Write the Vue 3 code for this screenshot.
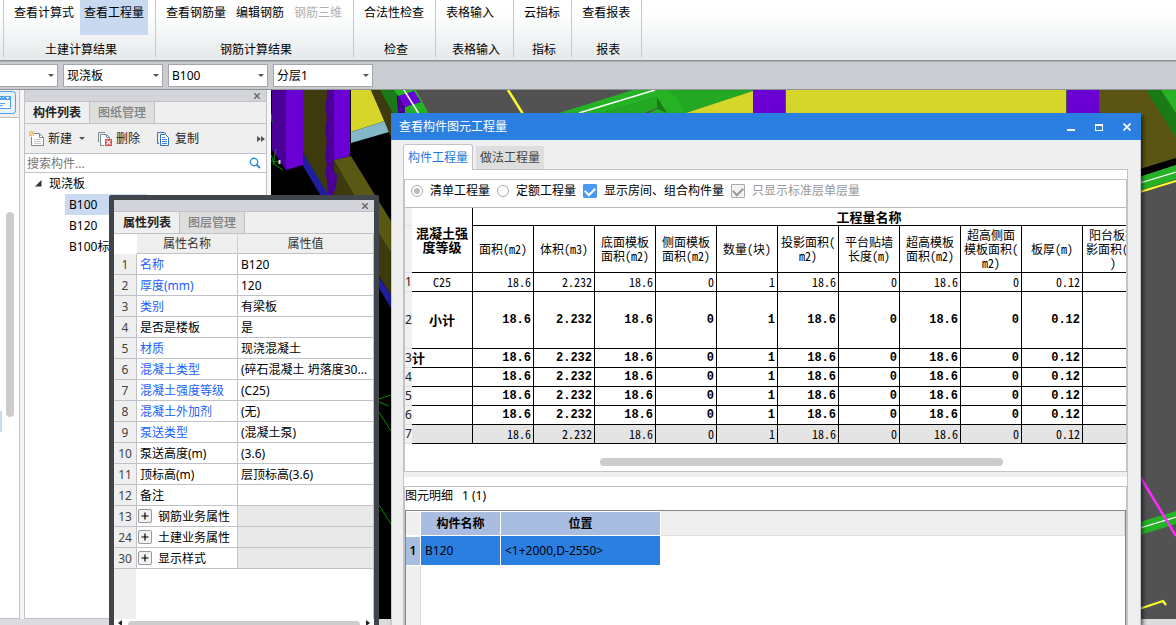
<script setup>
import { ref } from 'vue'

const ribbon = [
  { label: '土建计算结果', items: [{ text: '查看计算式' }, { text: '查看工程量', active: true }] },
  { label: '钢筋计算结果', items: [{ text: '查看钢筋量' }, { text: '编辑钢筋' }, { text: '钢筋三维', disabled: true }] },
  { label: '检查', items: [{ text: '合法性检查' }] },
  { label: '表格输入', items: [{ text: '表格输入' }], wide: true },
  { label: '指标', items: [{ text: '云指标' }] },
  { label: '报表', items: [{ text: '查看报表' }] }
]

const selectors = [
  { name: '楼层', value: '' },
  { name: '构件类型', value: '现浇板' },
  { name: '构件', value: 'B100' },
  { name: '分层', value: '分层1' }
]

const properties = [
  { no: 1, name: '名称', value: 'B120', link: true },
  { no: 2, name: '厚度(mm)', value: '120', link: true },
  { no: 3, name: '类别', value: '有梁板', link: true },
  { no: 4, name: '是否是楼板', value: '是' },
  { no: 5, name: '材质', value: '现浇混凝土', link: true },
  { no: 6, name: '混凝土类型', value: '(碎石混凝土 坍落度30...', link: true },
  { no: 7, name: '混凝土强度等级', value: '(C25)', link: true },
  { no: 8, name: '混凝土外加剂', value: '(无)', link: true },
  { no: 9, name: '泵送类型', value: '(混凝土泵)', link: true },
  { no: 10, name: '泵送高度(m)', value: '(3.6)' },
  { no: 11, name: '顶标高(m)', value: '层顶标高(3.6)' },
  { no: 12, name: '备注', value: '' },
  { no: 13, name: '钢筋业务属性', value: '', group: true },
  { no: 24, name: '土建业务属性', value: '', group: true },
  { no: 30, name: '显示样式', value: '', group: true }
]

const columns = [
  '面积(m2)', '体积(m3)', '底面模板\n面积(m2)', '侧面模板\n面积(m2)', '数量(块)',
  '投影面积(\nm2)', '平台贴墙\n长度(m)', '超高模板\n面积(m2)',
  '超高侧面\n模板面积(\nm2)', '板厚(m)', '阳台板投\n影面积(m2\n)'
]
const values = ['18.6', '2.232', '18.6', '0', '1', '18.6', '0', '18.6', '0', '0.12', '']
const rows = [
  { no: 1, label: 'C25', kind: 'plain' },
  { no: 2, label: '小计', kind: 'strong tall' },
  { no: 3, label: '计', kind: 'strong cut' },
  { no: 4, label: '', kind: 'strong' },
  { no: 5, label: '', kind: 'strong' },
  { no: 6, label: '', kind: 'strong' },
  { no: 7, label: '', kind: 'plain shade' }
]

const mode = ref('list')
const showRooms = ref(true)
</script>

<template>
  <div class="app">
    <header class="ribbon">
      <section v-for="g in ribbon" :key="g.label" class="group" :class="{ wide: g.wide }">
        <div class="group-items">
          <button v-for="b in g.items" :key="b.text" type="button" class="rbtn" :class="{ active: b.active }" :disabled="b.disabled">{{ b.text }}</button>
        </div>
        <div class="group-label">{{ g.label }}</div>
      </section>
    </header>

    <div class="selectbar">
      <span v-for="s in selectors" :key="s.name" class="combo">
        <select :aria-label="s.name"><option>{{ s.value }}</option></select>
      </span>
    </div>

    <main class="workspace">
      <div class="panes">
        <aside class="rail">
          <button type="button" class="rail-btn" aria-label="导航">
            <svg width="17" height="25" viewBox="0 0 17 25">
              <path d="M0 1.5H12.500Q15.500 1.500 15.500 4.500V20.500Q15.500 23.500 12.500 23.500H0" fill="#e6f1fe" stroke="#4ea0f8" />
              <path d="M0 6.500H10.500V18.500H0" fill="#fff" stroke="#4ea0f8" />
              <path d="M0 6H11V10H0Z" fill="#4ea0f8" />
              <path d="M0 7.500H1M3 7.500H4M6 7.500H9M7 8.500H8" stroke="#fff" />
              <path d="M0 13.500H5M0 15.500H3" stroke="#4ea0f8" />
            </svg>
          </button>
          <div class="rail-body"><span class="rail-thumb"></span><span class="rail-mark"></span></div>
        </aside>

        <section class="panel">
          <div class="strip"><button type="button" class="close" aria-label="关闭"><svg width="6" height="6" viewBox="0 0 6 6"><path d="M0 0L6 6M6 0L0 6" stroke="#666" stroke-width="1.400" /></svg></button></div>
          <nav class="tabs">
            <button type="button" class="tab on">构件列表</button>
            <button type="button" class="tab">图纸管理</button>
          </nav>
          <div class="tools">
            <button type="button" class="tool">
              <svg width="16" height="16" viewBox="0 0 16 16"><path d="M3.500 2.500H10.500L14.500 6.500V14.500H2.500V6" fill="#fff" stroke="#7b8a94" /><path d="M10.500 2.500V6.500H14.500" fill="none" stroke="#7b8a94" /><path d="M5 8.500H12M5 10.500H12M5 12.500H12" stroke="#ccc" /><path d="M2.500 0V5M0 2.500H5M0 0L5 5M5 0L0 5" stroke="#f5a623" /><circle cx="2.500" cy="2.500" r="1" fill="#fff" /></svg>
              新建<span class="caret"></span>
            </button>
            <button type="button" class="tool">
              <svg width="16" height="16" viewBox="0 0 16 16"><path d="M1.500 11V1.500H8" fill="none" stroke="#7b8a94" /><path d="M7 14.500H3.500V3.500H9.500L12.500 6.500V8" fill="#fff" stroke="#7b8a94" /><path d="M9.500 3.500V6.500H12.500" fill="none" stroke="#7b8a94" /><path d="M8 8H15V15H8Z" fill="#dc4b52" /><path d="M9.500 9.500L13.500 13.500M13.500 9.500L9.500 13.500" stroke="#fff" stroke-width="1.200" /></svg>
              删除
            </button>
            <button type="button" class="tool">
              <svg width="16" height="16" viewBox="0 0 16 16"><path d="M3 12.500H1.500V1.500H8.500L10 3" fill="none" stroke="#2f74c8" /><path d="M4.500 3.500H9.500L12.500 6.500V14.500H4.500Z" fill="#fff" stroke="#2f74c8" /><path d="M6 6.500H9M6 8.500H11M6 10.500H11M6 12.500H11" stroke="#3b82d8" /></svg>
              复制
            </button>
            <span class="more"><svg width="8" height="6" viewBox="0 0 8 6"><path d="M0 0L4 3L0 6ZM4 0L8 3L4 6Z" fill="#555" /></svg></span>
          </div>
          <div class="search">
            <input type="text" placeholder="搜索构件..." aria-label="搜索构件" />
            <svg width="12" height="12" viewBox="0 0 12 12"><circle cx="5" cy="5" r="3.700" fill="none" stroke="#2b8fd0" stroke-width="1.400" /><path d="M7.500 7.500L11 11" stroke="#2b8fd0" stroke-width="2" /></svg>
          </div>
          <ul class="tree">
            <li class="root"><svg width="7" height="7" viewBox="0 0 7 7"><path d="M6.500 0V6.500H0Z" fill="#333" /></svg>现浇板</li>
            <li class="leaf"><span class="sel">B100</span></li>
            <li class="leaf"><span>B120</span></li>
            <li class="leaf"><span>B100标</span></li>
          </ul>
        </section>

        <div class="canvas">
          <svg class="scene" viewBox="271 90 905 529" preserveAspectRatio="xMinYMin slice">
            <path d="M271 90H1176V619H271Z" fill="#000" />
            <path d="M416 90H1176V619H416Z" fill="#525252" />
            <path d="M272 90H286V170L272 150Z" fill="#4a0096" />
            <path d="M286 90H303V165L286 170Z" fill="#6a00d4" />
            <path d="M303 90H328V196L303 153Z" fill="#3d3a0e" />
            <path d="M303 153L329 196H321L303 166Z" fill="#1e1e9e" />
            <path d="M327 90H334V196H328L327 180L325 172L327 165L325 155L327 142L325 130L327 118L325 104L327 98Z" fill="#4a0096" />
            <path d="M334 90H350V156L334 160Z" fill="#6a00d4" />
            <path d="M334 160L351 156L391 221V260L379 240L355 200Z" fill="#5a5914" />
            <path d="M334 160L355 196L379 233L391 252V295L334 205Z" fill="#3d3a0e" />
            <path d="M334 172L337 175L336 188L334 192Z" fill="#4a0096" />
            <path d="M379 277L391 295V308L379 288Z" fill="#1e1e9e" />
            <path d="M351 90H371L385 121L351 132Z" fill="#d6d62a" />
            <path d="M351 132L385 121L389 132L351 143Z" fill="#82b8c8" />
            <path d="M371 90H381L394 113L398 150L391 137Z" fill="#3d3a0e" />
            <path d="M380 90H397L398 113H393Z" fill="#1a7a18" />
            <path d="M394 90H416L429 114H398V96Z" fill="#25b325" />
            <path d="M398 96L414 91L421 102L405 107V113H398Z" fill="#6a00d4" />
            <path d="M398 96L405 107V113H398Z" fill="#4a0096" />
            <path d="M404 90L419 114" stroke="#fff" stroke-width="1.500" />
            <path d="M508 90L523 114" stroke="#ffff2a" stroke-width="2.500" />
            <path d="M559 113L633 90H753V91L686 113H649L657 109V97L602 113Z" fill="#25b325" />
            <path d="M602 113L657 97V108L645 113Z" fill="#22a822" />
            <path d="M668 90H753V91L686 113L676 97Z" fill="#22a822" />
            <path d="M657 97L667 113L657 109Z" fill="#1a7a18" />
            <path d="M579 113L655 90" stroke="#fff" stroke-width="1.500" />
            <path d="M686 113L753 91V114H686Z" fill="#d6d62a" />
            <path d="M753 90H785V114H753ZM1067 90H1099V114H1067Z" fill="#6a00d4" />
            <path d="M786 90H1066V114H786Z" fill="#d6d62a" />
            <path d="M1099 90H1176V158L1141 169L1099 180Z" fill="#5a5512" />
            <path d="M1146 90H1161L1176 113V138Z" fill="#1a7a18" />
            <path d="M1161 90H1176V113Z" fill="#25b325" />
            <path d="M1130 172L1176 158V165L1130 180Z" fill="#000" />
            <path d="M1130 180L1176 165V179L1130 194Z" fill="#25b325" />
            <path d="M1130 186L1176 172" stroke="#fff" stroke-width="1.300" />
            <path d="M1130 195L1176 181" stroke="#ffff2a" stroke-width="2" />
            <path d="M1130 525L1176 511V524L1130 538Z" fill="#25b325" />
            <path d="M1130 531L1176 517" stroke="#fff" stroke-width="1.300" />
            <path d="M1130 460L1176 536" stroke="#ff2aff" stroke-width="2.500" />
            <path d="M1130 612L1163 601L1166 605" fill="none" stroke="#ffff2a" stroke-width="2.200" />
            <path d="M271 113L272 122M273 165L276 149M271 155L275 165L283 170M271 161L280 162M379 399L391 395M379 402L389 406M379 412L391 431M379 505L391 524" fill="none" stroke="#0a8a0a" />
            <path d="M279.500 160V164" stroke="#ddd" stroke-width="2" />
          </svg>
        </div>
      </div>
      <div class="statusbar"></div>

      <section class="props">
        <div class="strip"><button type="button" class="close" aria-label="关闭"><svg width="6" height="6" viewBox="0 0 6 6"><path d="M0 0L6 6M6 0L0 6" stroke="#666" stroke-width="1.400" /></svg></button></div>
        <nav class="tabs">
          <button type="button" class="tab on">属性列表</button>
          <button type="button" class="tab">图层管理</button>
        </nav>
        <div class="props-body">
          <table class="ptable">
            <colgroup><col class="c-no" /><col class="c-name" /><col /></colgroup>
            <thead><tr><th class="corner"></th><th>属性名称</th><th>属性值</th></tr></thead>
            <tbody>
              <tr v-for="p in properties" :key="p.no">
                <td class="no">{{ p.no }}</td>
                <td class="name" :class="{ link: p.link }"><button v-if="p.group" type="button" class="plus" aria-label="展开"><svg width="8" height="8" viewBox="0 0 8 8"><path d="M4 0.500V7.500M0.500 4H7.500" stroke="#000" stroke-width="1.200" /></svg></button>{{ p.name }}</td>
                <td class="val" :class="{ grey: p.group }">{{ p.value }}</td>
              </tr>
            </tbody>
          </table>
          <div class="gutter"></div>
        </div>
        <div class="hscroll">
          <svg width="4" height="6" viewBox="0 0 4 6"><path d="M4 0L0 3L4 6Z" fill="#222" /></svg>
          <span></span>
          <svg width="4" height="6" viewBox="0 0 4 6"><path d="M0 0L4 3L0 6Z" fill="#222" /></svg>
        </div>
      </section>

      <section class="dialog">
        <div class="titlebar">
          <h1>查看构件图元工程量</h1>
          <button type="button" aria-label="最小化"><svg width="8" height="8" viewBox="0 0 8 8"><path d="M0 6H8V8H0Z" fill="#fff" /></svg></button>
          <button type="button" aria-label="最大化"><svg width="8" height="8" viewBox="0 0 8 8"><path d="M0 1H8V8H0ZM1 3V7H7V3Z" fill="#fff" fill-rule="evenodd" /></svg></button>
          <button type="button" aria-label="关闭"><svg width="8" height="8" viewBox="0 0 8 8"><path d="M0.500 0.500L7.500 7.500M7.500 0.500L0.500 7.500" stroke="#fff" stroke-width="1.600" /></svg></button>
        </div>
        <div class="dialog-body">
          <nav class="dtabs">
            <button type="button" class="dtab on">构件工程量</button>
            <button type="button" class="dtab">做法工程量</button>
          </nav>
          <div class="pane">
            <div class="box">
              <div class="options">
                <label><input v-model="mode" type="radio" name="mode" value="list" />清单工程量</label>
                <label><input v-model="mode" type="radio" name="mode" value="quota" />定额工程量</label>
                <label><input v-model="showRooms" type="checkbox" />显示房间、组合构件量</label>
                <label class="off"><input type="checkbox" checked disabled />只显示标准层单层量</label>
              </div>
              <div class="sheet">
                <table class="qtable">
                  <colgroup><col class="q-no" /><col v-for="n in 12" :key="n" class="q-col" /></colgroup>
                  <thead>
                    <tr class="h1"><td class="idx"></td><th rowspan="2" class="grade">混凝土强<br />度等级</th><th colspan="11" class="span">工程量名称</th></tr>
                    <tr class="h2"><td class="idx"></td><th v-for="c in columns" :key="c" class="col">{{ c }}</th></tr>
                  </thead>
                  <tbody>
                    <tr v-for="r in rows" :key="r.no" :class="r.kind">
                      <td class="idx">{{ r.no }}</td>
                      <td class="lab">{{ r.label }}</td>
                      <td v-for="(v, i) in values" :key="i" class="num">{{ v }}</td>
                    </tr>
                  </tbody>
                </table>
                <div class="thumb-row"><span></span></div>
              </div>
            </div>
            <div class="splitter"></div>
            <div class="box detail">
              <div class="detail-title"><span>图元明细</span><span>1 (1)</span></div>
              <div class="dwrap">
                <table class="dtable">
                  <thead><tr><th class="d-idx"></th><th class="d-a">构件名称</th><th class="d-b">位置</th><th class="d-fill"></th></tr></thead>
                  <tbody><tr><th class="d-row">1</th><td>B120</td><td>&lt;1+2000,D-2550&gt;</td><td class="d-none"></td></tr></tbody>
                </table>
                <div class="d-gutter"></div>
              </div>
            </div>
          </div>
        </div>
      </section>
    </main>
  </div>
</template>

<style>
html, body { overflow: hidden; }
</style>

<style scoped>
.app, .app * { box-sizing: border-box; }
.app { height: 100vh; display: flex; flex-direction: column; overflow: hidden; font: 12px/16px "Noto Sans", "Noto Sans CJK SC", sans-serif; color: #000; background: #dcdcde; }
button, input, select { font: inherit; color: inherit; margin: 0; }
button { padding: 0; border: 0; background: none; white-space: nowrap; }
svg { display: block; flex: none; }
table { border-collapse: separate; border-spacing: 0; table-layout: fixed; }
th, td { padding: 0; }

.ribbon { flex: none; height: 61px; display: flex; padding: 0 0 3px 3px; background: linear-gradient(#fff 20%, #e5e9ea); border-bottom: 1px solid #8b8f93; }
.group { display: flex; flex-direction: column; border-left: 1px solid #c6c9cc; padding: 0 7px 0 6px; }
.group:last-child { border-right: 1px solid #c6c9cc; }
.group-items { display: flex; gap: 2px; }
.wide .group-items { padding-right: 8px; }
.rbtn { height: 35px; padding: 5px 4px 14px; }
.rbtn.active { background: #c8d9f0; }
.rbtn:disabled { color: #b0b0b0; }
.group-label { text-align: center; padding: 7px 0 0 4px; }

.selectbar { flex: none; height: 29px; display: flex; gap: 5px; padding: 3px 0 2px; background: #c9ccd1; border-bottom: 1px solid #8f9297; box-shadow: inset 0 2px 1px -1px #a9acb0; }
.combo { position: relative; width: 100px; height: 23px; }
.combo:first-child { width: 58px; }
.combo select { appearance: none; width: 100%; height: 23px; padding: 0 20px 0 3px; border: 1px solid #a4a6a9; border-radius: 0; background: #fff; }
.combo:first-child select { border-left: 0; }
.combo::after { content: ""; position: absolute; right: 4px; top: 10px; border: 3px solid transparent; border-top-color: #555; border-bottom: 0; }

.workspace { flex: 1; min-height: 0; position: relative; display: flex; flex-direction: column; overflow: hidden; }
.panes { flex: 1; min-height: 0; display: flex; background: #f6f6f6; }
.statusbar { flex: none; height: 6px; background: #dcdcde; }

.rail { width: 20px; display: flex; flex-direction: column; background: #efefef; border-right: 1px solid #bfc3c8; border-bottom: 1px solid #bfc3c8; }
.rail-btn { height: 27px; align-self: flex-start; padding-bottom: 2px; }
.rail-body { flex: 1; position: relative; background: #fff; border-top: 1px solid #bfc3c8; }
.rail-thumb { position: absolute; left: 6px; top: 94px; width: 8px; height: 205px; border-radius: 4px; background: #ccc; }
.rail-mark { position: absolute; left: 0; top: 293px; width: 2px; height: 21px; background: #c8d9f0; }

.panel { width: 243px; margin-left: 4px; display: flex; flex-direction: column; background: #fff; border: 1px solid #bfc3c8; border-top: 0; }
.strip { flex: none; height: 12px; display: flex; justify-content: flex-end; align-items: center; padding-right: 6px; background: #d3d5da; border-bottom: 1px solid #bfc3c8; }
.tabs { flex: none; height: 22px; display: flex; background: #efefef; border-bottom: 1px solid #bfc3c8; }
.tab { padding: 0 8px; background: #dedede; color: #808080; border-right: 1px solid #bfc3c8; font-weight: 500; }
.tab.on { background: #efefef; color: #222; font-weight: 600; }
.tools { flex: none; height: 30px; display: flex; align-items: center; gap: 12px; padding: 0 1px 0 4px; background: #efefef; border-bottom: 1px solid #bfc3c8; color: #222; }
.tool { display: flex; align-items: center; gap: 3px; }
.tool + .tool + .tool { margin-left: 4px; }
.tool .caret { margin-left: 4px; border: 3px solid transparent; border-top-color: #555; border-bottom: 0; }
.more { margin-left: auto; }
.search { flex: none; height: 19px; display: flex; align-items: center; padding: 0 5px 0 2px; border-bottom: 1px solid #bfc3c8; }
.search input { flex: 1; min-width: 0; height: 18px; padding: 0; border: 0; outline: 0; background: none; }
.search input::placeholder { color: #777; opacity: 1; }
.tree { margin: 0; padding: 0; list-style: none; overflow: hidden; line-height: 21px; }
.root { display: flex; align-items: center; gap: 7px; padding-left: 10px; }
.leaf { padding-left: 40px; }
.leaf span { display: block; width: 82px; padding-left: 4px; }
.leaf .sel { background: #c8d9f0; }

.canvas { flex: 1; min-width: 0; margin-left: 4px; position: relative; background: #525252; overflow: hidden; }
.scene { position: absolute; inset: 0; width: 100%; height: 100%; }

.props { position: absolute; left: 109px; top: 105px; bottom: 0; width: 270px; display: flex; flex-direction: column; border: 5px solid #3f454a; border-bottom: 0; border-radius: 3px 3px 0 0; background: #fff; overflow: hidden; }
.props .tab { padding: 0 8px; }
.props .tab.on { padding: 0 8px 0 9px; }
.props-body { flex: 1; min-height: 0; display: flex; flex-direction: column; border-right: 1px solid #bfc3c8; }
.ptable { width: 100%; flex: none; }
.c-no { width: 23px; }
.c-name { width: 101px; }
.ptable th { height: 20px; padding-top: 1px; font-weight: 400; background: #efefef; color: #333; border-right: 1px solid #d0d0d0; border-bottom: 1px solid #bfc3c8; }
.ptable th:last-child { border-right: 0; }
.ptable .corner { background: #fff; border-color: #fff; }
.ptable td { height: 21px; padding-top: 2px; border-right: 1px solid #bfc3c8; border-bottom: 1px solid #bfc3c8; white-space: nowrap; }
.ptable td.val { border-right: 0; padding-left: 3px; }
.ptable .no { background: #efefef; color: #444; text-align: center; }
.ptable .name { padding-left: 3px; }
.ptable .link { color: #1a5fff; }
.ptable .grey { background: #e9e9e9; }
.plus { display: inline-flex; align-items: center; justify-content: center; vertical-align: middle; width: 14px; height: 14px; margin: 0 6px 2px -2px; border: 1px solid #999; border-radius: 2px; background: #f2f2f2; }
.gutter { flex: 1; width: 22px; background: #efefef; }
.hscroll { flex: none; height: 6px; display: flex; align-items: center; gap: 6px; padding: 2px 4px 0; }
.hscroll span { flex: 1; height: 4px; background: #ccc; border-radius: 4px 4px 0 0; }

.dialog { position: absolute; left: 391px; right: 35px; top: 23px; bottom: 0; display: flex; flex-direction: column; background: #efefef; box-shadow: 2px 3px 4px rgba(0, 0, 0, 0.600); }
.titlebar { flex: none; height: 27px; display: flex; align-items: center; gap: 20px; padding: 0 10px 0 8px; background: #2b7fe0; }
.titlebar h1 { flex: 1; margin: 0; font-size: 12px; font-weight: 400; color: #fff; }
.dialog-body { flex: 1; min-height: 0; display: flex; flex-direction: column; padding: 4px 12px 0 11px; border-left: 1px solid #c0c8d0; border-right: 1px solid #c0c8d0; }
.dtabs { flex: none; height: 26px; display: flex; align-items: flex-end; gap: 3px; z-index: 1; }
.dtab { height: 23px; padding: 0 4px; margin-bottom: 1px; color: #444; background: #dedede; }
.dtab.on { height: 26px; margin-bottom: 0; color: #1f77dc; background: #fff; border: 1px solid #c0c4c9; border-bottom: 0; border-radius: 3px 3px 0 0; }
.pane { flex: 1; min-height: 0; display: flex; flex-direction: column; margin-top: -1px; padding-top: 9px; background: #fff; border: 1px solid #c0c4c9; border-bottom: 0; }
.box { border: 1px solid #c0c4c9; border-bottom: 0; overflow: hidden; }
.options { height: 27px; display: flex; align-items: center; gap: 7px; padding: 0 6px 5px; }
.options label { display: flex; align-items: center; gap: 7px; white-space: nowrap; }
.options .off { color: #999; }
.options input { appearance: none; flex: none; display: grid; place-content: center; width: 12px; height: 12px; border: 1px solid #aaa; border-radius: 50%; background: #fff; }
.options input[type="radio"]:checked::before { content: ""; width: 6px; height: 6px; border-radius: 50%; background: #bbb; }
.options input[type="checkbox"] { width: 14px; height: 14px; border-radius: 1px; border-color: #4a9af5; background: #4a9af5; }
.options input[type="checkbox"]::before { content: ""; width: 8px; height: 5px; margin-top: -2px; border-left: 2px solid #fff; border-bottom: 2px solid #fff; transform: rotate(-45deg); }
.options input[type="checkbox"]:disabled { background: #f2f2f2; border-color: #aaa; }
.options input[type="checkbox"]:disabled::before { border-color: #999; }
.sheet { border-top: 1px solid #bbb; overflow: hidden; border-bottom: 1px solid #c0c4c9; }

.qtable { width: 739px; font-family: "Noto Sans Mono CJK SC", "Liberation Mono", "Noto Sans CJK SC", monospace; line-height: 14px; }
.q-no { width: 7px; }
.q-col { width: 61px; }
.qtable th, .qtable td { border-right: 1px solid #000; border-bottom: 1px solid #000; font-weight: 400; white-space: nowrap; }
.qtable .col { white-space: pre; }
.qtable .idx { border: 0; border-bottom: 1px solid #e0e0e0; background: #f0f0f0; font-family: "Noto Sans", sans-serif; font-size: 12px; color: #222; }
.qtable .grade, .qtable .span { font-weight: 700; font-size: 13px; }
.qtable .span { padding-left: 122px; }
.h1 { height: 18px; }
.h2 { height: 47px; }
.qtable tbody tr { height: 19px; }
.qtable tbody tr.tall { height: 57px; }
.lab { text-align: center; }
.cut .lab { text-align: left; }
.qtable .num { text-align: right; padding-right: 2px; }
.qtable .strong .lab { font-weight: 700; font-size: 13px; }
.qtable .strong .num { font-family: "Liberation Mono", monospace; font-weight: 700; }
.shade .lab, .shade .num { background: #e4e4e4; }
.thumb-row { height: 27px; display: flex; padding-top: 14px; }
.thumb-row span { width: 56%; height: 8px; margin-left: 27%; border-radius: 4px; background: #ccc; }

.splitter { flex: none; height: 5px; margin-bottom: 9px; background: #efefef; }
.detail { flex: 1; min-height: 0; display: flex; flex-direction: column; }
.detail-title { flex: none; height: 23px; display: flex; gap: 9px; padding-top: 1px; }
.dwrap { flex: 1; display: flex; flex-direction: column; border: 1px solid #80868c; border-bottom: 0; }
.dtable { width: 100%; flex: none; }
.dtable th { height: 25px; font-weight: 600; background: #a9bde0; border: 1px solid #fff; border-left: 0; }
.dtable .d-idx { width: 15px; background: #efefef; }
.dtable .d-a { width: 80px; }
.dtable .d-b { width: 160px; }
.dtable .d-fill { background: #efefef; border-top: 0; border-color: #e0e0e0; }
.dtable td { height: 30px; padding-left: 4px; background: #2b7fe0; border-right: 1px solid #fff; border-bottom: 1px solid #fff; }
.dtable .d-none { background: #fff; }
.d-gutter { flex: 1; width: 15px; background: #efefef; border-right: 1px solid #ddd; }
</style>
